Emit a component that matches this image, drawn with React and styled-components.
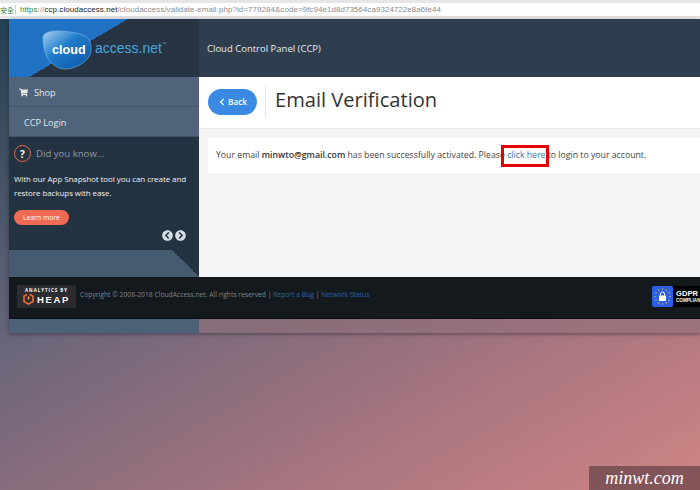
import React from "react";
import styled, { createGlobalStyle } from "styled-components";
import { FaShoppingCart, FaChevronLeft, FaChevronCircleLeft, FaChevronCircleRight } from "react-icons/fa";

const GlobalStyle = createGlobalStyle`
  html, body {
    margin: 0;
    padding: 0;
    height: 490px;
    overflow: hidden;
  }
  * {
    box-sizing: border-box;
  }
`;

const Screen = styled.div`
  position: relative;
  width: 700px;
  height: 490px;
  overflow: hidden;
  font-family: "Open Sans", sans-serif;
  background: linear-gradient(150deg, #1f3f50 0%, #68657a 38%, #a5747f 72%, #d08585 100%);
`;

const AddressBar = styled.div`
  height: 19px;
  padding: 3px 0;
  background: #e6e6e8;
  border-bottom: 1px solid #f4f4f6;
`;

const AddressField = styled.div`
  display: flex;
  align-items: center;
  height: 13px;
  background: #fff;
  font-family: "Liberation Sans", sans-serif;
  font-size: 7.95px;
  letter-spacing: 0.08px;
  white-space: nowrap;
  color: #8b8b8b;
`;

const Secure = styled.span`
  width: 16px;
  margin-right: 4px;
  border-right: 1px solid #cfcfcf;
  font-family: "Noto Sans CJK TC", sans-serif;
  font-size: 7px;
  color: #2f8a45;
`;

const Https = styled.span`
  color: #2f8a45;
`;

const Domain = styled.span`
  color: #222;
`;

const Page = styled.div`
  width: 691px;
  margin-left: 9px;
  box-shadow: 0 1px 4px rgba(30, 30, 40, 0.55);
`;

const Header = styled.div`
  display: flex;
  height: 58px;
  background: #2f3e4f;
`;

const LogoArea = styled.div`
  display: flex;
  flex-shrink: 0;
  align-items: center;
  width: 190px;
  padding: 3px 0 0 32px;
  background: #263443 linear-gradient(149.6deg, #1f72c4 50%, #263443 50%) no-repeat;
  background-size: 139px 100%;
`;

const AccessNet = styled.span`
  margin: -3px 0 0 2px;
  font-family: "Liberation Sans", sans-serif;
  font-size: 14px;
  color: #48a6de;
  sup {
    font-size: 4px;
    color: #8fb4cc;
    vertical-align: 8px;
  }
`;

const HeaderTitle = styled.div`
  display: flex;
  align-items: center;
  padding-left: 8px;
  font-size: 9.5px;
  color: #e6ebef;
`;

const Main = styled.div`
  display: flex;
  height: 200px;
`;

const Sidebar = styled.div`
  display: flex;
  flex-shrink: 0;
  flex-direction: column;
  width: 190px;
  background: #243342;
`;

const MenuItem = styled.div`
  display: flex;
  align-items: center;
  gap: 6px;
  height: 30px;
  padding: 1px 0 0 ${(p) => (p.$indent ? "15px" : "10px")};
  background: #50637a;
  border-bottom: 1px solid #43546a;
  font-size: 9.1px;
  color: #e4e9ee;
`;

const Tip = styled.div`
  display: flex;
  flex-direction: column;
  flex: 1;
  padding: 8px 5px 0;
`;

const TipHeading = styled.div`
  display: flex;
  align-items: center;
  gap: 5px;
  font-size: 9.6px;
  color: #8b99a8;
`;

const QuestionMark = styled.span`
  display: flex;
  align-items: center;
  justify-content: center;
  width: 17px;
  height: 17px;
  border: 1.5px solid #e8694f;
  border-radius: 50%;
  font-size: 10px;
  font-weight: 700;
  color: #fff;
`;

const TipText = styled.p`
  margin: 10px 0 0;
  font-size: 8px;
  letter-spacing: -0.08px;
  line-height: 14px;
  white-space: nowrap;
  color: #eef1f4;
`;

const LearnMore = styled.button`
  align-self: flex-start;
  width: 55px;
  height: 15px;
  margin-top: 10px;
  padding: 0;
  border: 0;
  border-radius: 8px;
  background: #ee6a55;
  font-family: inherit;
  font-size: 6.8px;
  color: #fff;
`;

const TipNav = styled.div`
  display: flex;
  justify-content: flex-end;
  gap: 2px;
  margin-top: 5px;
  padding-right: 8px;
  font-size: 11px;
  color: #d6dee7;
`;

const SidebarEnd = styled.div`
  height: 27px;
  background: #465a70 linear-gradient(45deg, #465a70 50%, #243342 50%) no-repeat top right;
  background-size: 27px 27px;
`;

const Content = styled.div`
  flex: 1;
  min-width: 0;
  background: #f4f4f4;
`;

const TitleBar = styled.div`
  display: flex;
  align-items: center;
  height: 52px;
  padding: 0 0 2px 9px;
  background: #fff;
  border-bottom: 1px solid #e8e8e8;
`;

const BackButton = styled.button`
  display: flex;
  align-items: center;
  justify-content: center;
  gap: 2px;
  width: 49px;
  height: 26px;
  padding: 0;
  border: 0;
  border-radius: 13px;
  background: #3a8ae4;
  font-family: inherit;
  font-size: 8.3px;
  font-weight: 600;
  color: #fff;
`;

const TitleDivider = styled.span`
  width: 1px;
  height: 33px;
  margin: 0 9px 0 8px;
  background: #e6e6e6;
`;

const Title = styled.h1`
  margin: -4px 0 0;
  font-size: 20.1px;
  font-weight: 400;
  color: #333;
`;

const Notice = styled.div`
  display: flex;
  align-items: center;
  height: 35px;
  margin: 9px 0 0 9px;
  padding: 0 0 1px 8px;
  background: #fff;
  font-size: 8.72px;
  white-space: pre;
  color: #444;
  strong {
    font-weight: 600;
    color: #333;
  }
`;

const ClickHere = styled.a`
  position: relative;
  color: #3478b8;
  &::after {
    content: "";
    position: absolute;
    left: -6px;
    right: -4px;
    top: -4px;
    bottom: -6px;
    border: 3px solid #e60000;
  }
`;

const Footer = styled.div`
  display: flex;
  align-items: center;
  height: 42px;
  padding: 0 0 3px 8px;
  background: #14191e;
  border-bottom: 1px solid #0a0d10;
`;

const HeapBadge = styled.div`
  display: flex;
  flex-direction: column;
  align-items: center;
  justify-content: center;
  width: 59px;
  height: 23px;
  background: #2b2b30;
  color: #fff;
`;

const HeapCaption = styled.span`
  font-size: 4.4px;
  font-weight: 700;
  letter-spacing: 1px;
  line-height: 6px;
`;

const HeapName = styled.span`
  display: flex;
  align-items: center;
  gap: 3px;
  font-family: "Liberation Sans", sans-serif;
  font-size: 9.5px;
  font-weight: 700;
  letter-spacing: 1.7px;
  line-height: 13px;
`;

const Copyright = styled.div`
  margin: -3px 0 0 4px;
  font-size: 6.75px;
  white-space: pre;
  color: #7d858c;
  a {
    color: #2a669f;
  }
`;

const Gdpr = styled.div`
  display: flex;
  margin-left: auto;
  height: 21px;
`;

const GdprMark = styled.div`
  display: flex;
  align-items: center;
  justify-content: center;
  width: 21px;
  height: 21px;
  border-radius: 2px;
  background: #2a5fe6;
`;

const GdprLabel = styled.div`
  display: flex;
  flex-direction: column;
  justify-content: center;
  width: 27px;
  overflow: hidden;
  padding-left: 3px;
  background: #000;
  font-family: "Liberation Sans", sans-serif;
  font-weight: 700;
  color: #fff;
  b {
    font-size: 7.6px;
    line-height: 9px;
  }
  span {
    font-size: 4.6px;
    line-height: 6px;
  }
`;

const BottomStrip = styled.div`
  display: flex;
  height: 14px;
`;

const StripSide = styled.div`
  width: 190px;
  background: #4b6279;
`;

const StripRest = styled.div`
  flex: 1;
  background: rgba(140, 112, 120, 0.55);
`;

const Watermark = styled.div`
  position: absolute;
  right: 0;
  bottom: 0;
  width: 111px;
  height: 24px;
  text-align: center;
  background: rgba(90, 60, 65, 0.65);
  font-family: "Liberation Serif", serif;
  font-style: italic;
  font-size: 18px;
  line-height: 24px;
  color: #fff;
`;

const CloudLogo = () => (
  <svg width="52" height="40" viewBox="0 0 52 40">
    <defs>
      <linearGradient id="blob" x1="0" y1="0" x2="1" y2="1">
        <stop offset="0" stopColor="#a9d3f0" />
        <stop offset="0.42" stopColor="#1f7ccb" />
        <stop offset="1" stopColor="#0b55a5" />
      </linearGradient>
    </defs>
    <path
      d="M2 8C2 3 8 1 16 1C26 1 38 3 44 6C49 8 50 14 50 20C50 30 36 39 24 39C16 39 9 33 5 25C3 20 2 13 2 8Z"
      fill="url(#blob)"
      stroke="#7fb8e6"
      strokeWidth="0.6"
    />
    <text x="11" y="23.5" fontFamily="Liberation Sans, sans-serif" fontSize="12.6" fontWeight="700" fill="#fff">
      cloud
    </text>
  </svg>
);

const HeapIcon = () => (
  <svg width="11" height="12" viewBox="0 0 11 12">
    <path d="M6.5 1.2L10 3.3V8.6L5.5 11L1 8.6V3.3L4 1.6" fill="none" stroke="#e8693a" strokeWidth="1.7" />
    <path d="M5.5 3.5V6.5" stroke="#f0a040" strokeWidth="1.7" />
  </svg>
);

const STAR_ANGLES = [0, 30, 60, 90, 120, 150, 180, 210, 240, 270, 300, 330];

const GdprIcon = () => (
  <svg width="19" height="19" viewBox="0 0 19 19">
    {STAR_ANGLES.map((a) => (
      <circle
        key={a}
        cx={9.5 + 7.5 * Math.cos((a * Math.PI) / 180)}
        cy={9.5 + 7.5 * Math.sin((a * Math.PI) / 180)}
        r="0.7"
        fill="#e0c440"
      />
    ))}
    <rect x="6" y="8.5" width="7" height="5.5" rx="0.5" fill="#fff" />
    <path d="M7.5 8.5V7a2 2 0 0 1 4 0v1.5" fill="none" stroke="#fff" strokeWidth="1" />
  </svg>
);

const App = () => {
  return (
    <Screen>
      <GlobalStyle />
      <AddressBar>
        <AddressField>
          <Secure>安全</Secure>
          <Https>https</Https>://<Domain>ccp.cloudaccess.net</Domain>
          /cloudaccess/validate-email.php?id=779284&amp;code=9fc94e1d8d73564ca9324722e8a6fe44
        </AddressField>
      </AddressBar>
      <Page>
        <Header>
          <LogoArea>
            <CloudLogo />
            <AccessNet>
              access.net<sup>™</sup>
            </AccessNet>
          </LogoArea>
          <HeaderTitle>Cloud Control Panel (CCP)</HeaderTitle>
        </Header>
        <Main>
          <Sidebar>
            <MenuItem>
              <FaShoppingCart size={9} />
              Shop
            </MenuItem>
            <MenuItem $indent>CCP Login</MenuItem>
            <Tip>
              <TipHeading>
                <QuestionMark>?</QuestionMark>
                Did you know...
              </TipHeading>
              <TipText>
                With our App Snapshot tool you can create and
                <br />
                restore backups with ease.
              </TipText>
              <LearnMore>Learn more</LearnMore>
              <TipNav>
                <FaChevronCircleLeft />
                <FaChevronCircleRight />
              </TipNav>
            </Tip>
            <SidebarEnd />
          </Sidebar>
          <Content>
            <TitleBar>
              <BackButton>
                <FaChevronLeft size={8} />
                Back
              </BackButton>
              <TitleDivider />
              <Title>Email Verification</Title>
            </TitleBar>
            <Notice>
              <span>
                Your email <strong>minwto@gmail.com</strong> has been successfully activated. Please{" "}
                <ClickHere>click here</ClickHere> to login to your account.
              </span>
            </Notice>
          </Content>
        </Main>
        <Footer>
          <HeapBadge>
            <HeapCaption>ANALYTICS BY</HeapCaption>
            <HeapName>
              <HeapIcon />
              HEAP
            </HeapName>
          </HeapBadge>
          <Copyright>
            Copyright © 2008-2018 CloudAccess.net. All rights reserved | <a>Report a Bug</a> | <a>Network Status</a>
          </Copyright>
          <Gdpr>
            <GdprMark>
              <GdprIcon />
            </GdprMark>
            <GdprLabel>
              <b>GDPR</b>
              <span>COMPLIANT</span>
            </GdprLabel>
          </Gdpr>
        </Footer>
        <BottomStrip>
          <StripSide />
          <StripRest />
        </BottomStrip>
      </Page>
      <Watermark>minwt.com</Watermark>
    </Screen>
  );
};

export default App;
